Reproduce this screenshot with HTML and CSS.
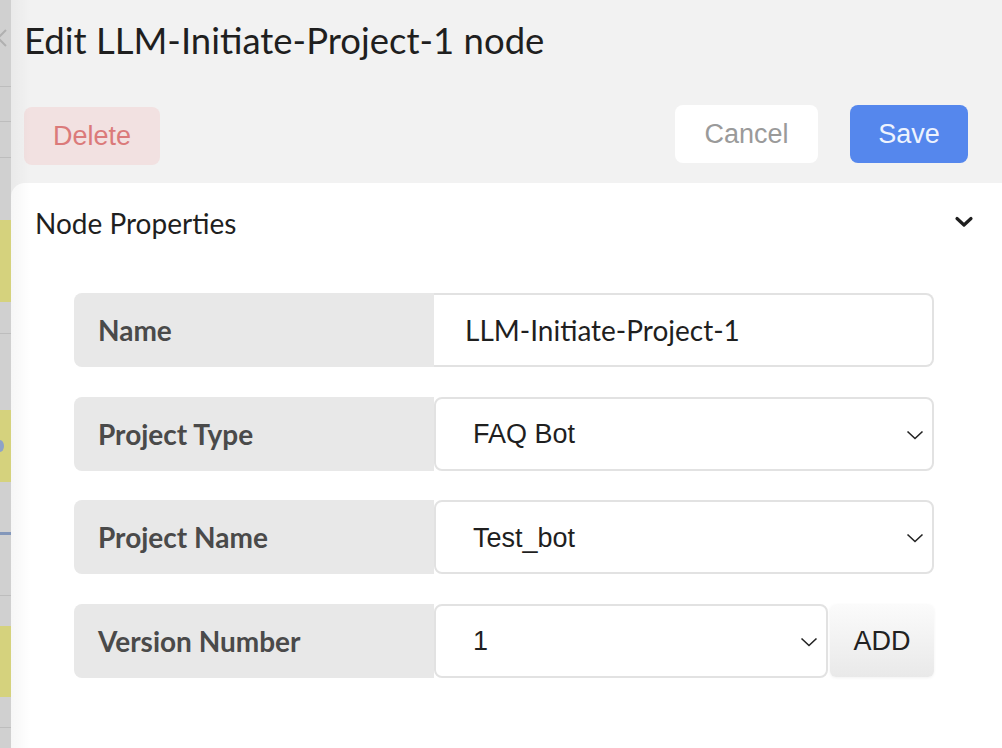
FILE: index.html
```html
<!DOCTYPE html>
<html lang="en">
<head>
<meta charset="utf-8">
<title>Edit node</title>
<link rel="stylesheet" href="styles.css">
</head>
<body>
<div class="app">
  <div class="rail">
    <svg class="rail-glyph" width="11" height="70" viewBox="0 0 11 70"><path d="M6 30 L-2 38 L6 46" fill="none" stroke="#b0b0b0" stroke-width="2"/></svg>
    <div class="rail-line l1"></div>
    <div class="rail-line l2"></div>
    <div class="rail-line l3"></div>
    <div class="rail-block b1"></div>
    <div class="rail-line l4"></div>
    <div class="rail-block b2"><span class="rail-dot"></span></div>
    <div class="rail-bar"></div>
    <div class="rail-line l5"></div>
    <div class="rail-block b3"></div>
    <div class="rail-line l6"></div>
  </div>
  <div class="panel">
    <h1 class="title">Edit LLM-Initiate-Project-1 node</h1>
    <div class="actions">
      <button class="btn btn-delete">Delete</button>
      <div class="actions-right">
        <button class="btn btn-cancel">Cancel</button>
        <button class="btn btn-save">Save</button>
      </div>
    </div>
    <section class="card">
      <div class="card-head">
        <span class="card-title">Node Properties</span>
        <svg class="card-chevron" width="20" height="14" viewBox="0 0 20 14"><path d="M3 3.5 L10 10 L17 3.5" fill="none" stroke="#1f1f1f" stroke-width="3.2" stroke-linecap="round" stroke-linejoin="round"/></svg>
      </div>
      <div class="form">
        <div class="row">
          <div class="label">Name</div>
          <div class="field field-input">LLM-Initiate-Project-1</div>
        </div>
        <div class="row">
          <div class="label">Project Type</div>
          <div class="field field-select"><span>FAQ Bot</span><svg class="sel-chev" width="18" height="10" viewBox="0 0 18 10"><path d="M1.5 1.5 L9 8.5 L16.5 1.5" fill="none" stroke="#222" stroke-width="1.6"/></svg></div>
        </div>
        <div class="row">
          <div class="label">Project Name</div>
          <div class="field field-select"><span>Test_bot</span><svg class="sel-chev" width="18" height="10" viewBox="0 0 18 10"><path d="M1.5 1.5 L9 8.5 L16.5 1.5" fill="none" stroke="#222" stroke-width="1.6"/></svg></div>
        </div>
        <div class="row">
          <div class="label">Version Number</div>
          <div class="field field-select field-short"><span>1</span><svg class="sel-chev" width="18" height="10" viewBox="0 0 18 10"><path d="M1.5 1.5 L9 8.5 L16.5 1.5" fill="none" stroke="#222" stroke-width="1.6"/></svg></div>
          <button class="btn-add">ADD</button>
        </div>
      </div>
    </section>
  </div>
</div>
</body>
</html>
```

FILE: styles.css
```css
* { box-sizing: border-box; }
html, body { margin: 0; padding: 0; height: 100%; }
body {
  background: #f2f2f2;
  overflow: hidden;
  font-family: "Lato", "Liberation Sans", sans-serif;
}
.app {
  display: flex;
  height: 748px;
}
.rail {
  width: 11px;
  flex: none;
  background: #d0d0d0;
  display: flex;
  flex-direction: column;
  overflow: hidden;
}
.rail-glyph { flex: none; display: block; }
.rail-line { height: 1px; background: #bdbdbd; flex: none; }
.l1 { margin-top: 16px; }
.l2 { margin-top: 34px; }
.l3 { margin-top: 35px; }
.rail-block { background: #d5d27d; flex: none; position: relative; }
.b1 { margin-top: 62px; height: 82px; }
.l4 { margin-top: 31px; }
.b2 { margin-top: 76px; height: 72px; }
.rail-dot {
  position: absolute;
  left: -4px; top: 30px;
  width: 8px; height: 12px;
  border-radius: 50%;
  background: #8ea2c8;
}
.rail-bar { margin-top: 50px; height: 3px; background: #8397ba; flex: none; }
.l5 { margin-top: 60px; }
.b3 { margin-top: 30px; height: 71px; }
.l6 { margin-top: 30px; }

.panel {
  flex: 1;
  position: relative;
  padding: 20px 0 0 13px;
  display: flex;
  flex-direction: column;
}
.panel::after {
  content: "";
  position: absolute;
  left: 0; top: 0; bottom: 0;
  width: 20px;
  background: linear-gradient(to right, rgba(0,0,0,0.035), rgba(0,0,0,0));
  pointer-events: none;
}
.title {
  margin: 0;
  font-size: 36.5px;
  line-height: 40px;
  font-weight: 400;
  color: #1f1f1f;
}
.actions {
  margin-top: 45px;
  display: flex;
  align-items: flex-start;
  justify-content: space-between;
  padding-right: 34px;
}
.actions-right { display: flex; gap: 32px; }
.btn {
  border: none;
  height: 58px;
  border-radius: 8px;
  font-family: "Liberation Sans", Arial, sans-serif;
  font-size: 27px;
  padding: 0;
}
.btn-delete {
  margin-top: 2px;
  width: 136px;
  background: #f2e1e1;
  color: #db7a7a;
}
.btn-cancel {
  width: 143px;
  background: #ffffff;
  color: #9a9a9a;
}
.btn-save {
  width: 118px;
  background: #5587ed;
  color: #eef3fe;
}
.card {
  margin: 18px 0 0 -13px;
  flex: 1;
  background: #ffffff;
  border-top-left-radius: 14px;
}
.card-head {
  display: flex;
  align-items: center;
  justify-content: space-between;
  height: 80px;
  padding: 0 28px 0 24px;
}
.card-title {
  font-size: 28px;
  color: #1f1f1f;
}
.card-chevron { margin-top: -2px; }
.form {
  margin-top: 30px;
  padding-left: 63px;
  display: flex;
  flex-direction: column;
  gap: 29.5px;
}
.row {
  display: flex;
  width: 860px;
  height: 74px;
}
.label {
  width: 360px;
  flex: none;
  background: #e8e8e8;
  border-radius: 8px 0 0 8px;
  display: flex;
  align-items: center;
  padding-left: 24px;
  font-weight: 700;
  font-size: 28px;
  color: #4a4a4a;
}
.field {
  flex: 1;
  border: 2px solid #e2e2e2;
  border-radius: 8px;
  display: flex;
  align-items: center;
  color: #1f1f1f;
}
.field-input {
  border-left: none;
  border-radius: 0 8px 8px 0;
  padding-left: 31px;
  font-family: "Lato", sans-serif;
  font-size: 28px;
}
.field-select {
  justify-content: space-between;
  padding: 2px 8px 0 37px;
  font-family: "Liberation Sans", Arial, sans-serif;
  font-size: 27px;
}
.field-short { flex: none; width: 394px; }
.btn-add {
  margin-left: 2px;
  width: 104px;
  height: 73px;
  border: none;
  border-radius: 6px;
  background: linear-gradient(#fbfbfb, #e9e9e9);
  box-shadow: 0 1px 3px rgba(0,0,0,0.06);
  font-family: "Liberation Sans", Arial, sans-serif;
  font-size: 27px;
  color: #222;
  padding: 2px 0 0;
}
```
